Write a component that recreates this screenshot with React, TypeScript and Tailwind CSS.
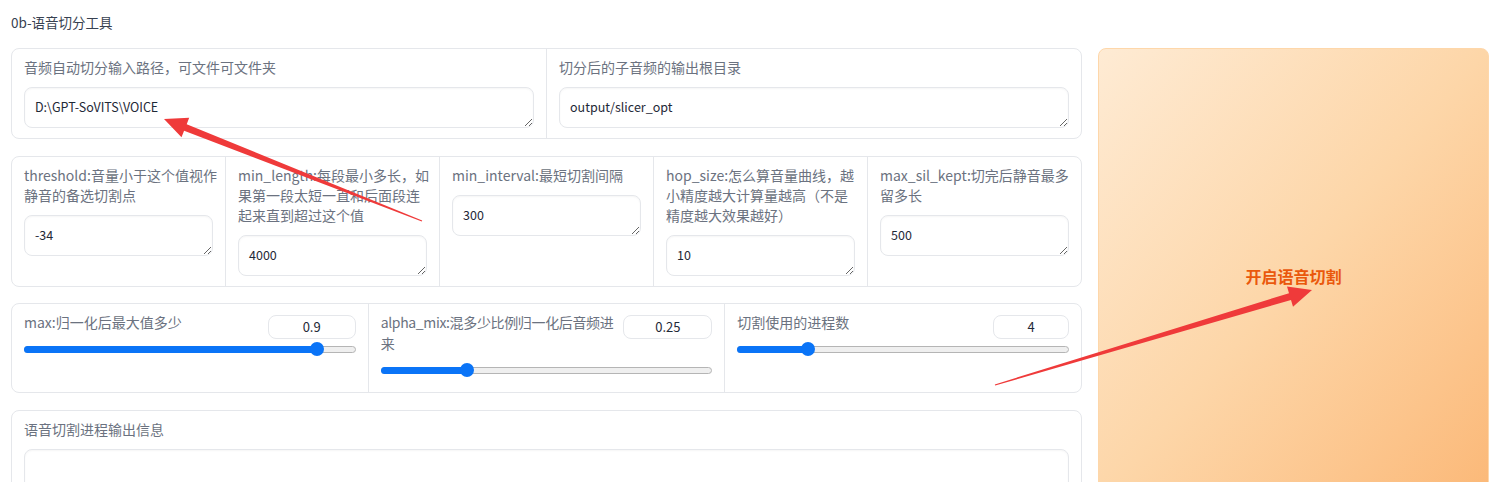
const FONT = { fontFamily: '"Noto Sans CJK SC", "Noto Sans", sans-serif' };

type Pt = [number, number];

function arrowPoints(tail: Pt, tip: Pt, headLen: number, headHalf: number, shaftHead: number, shaftTail: number) {
  const dx = tip[0] - tail[0];
  const dy = tip[1] - tail[1];
  const len = Math.hypot(dx, dy);
  const ux = dx / len;
  const uy = dy / len;
  const px = -uy;
  const py = ux;
  const bx = tip[0] - ux * headLen;
  const by = tip[1] - uy * headLen;
  const pts: Pt[] = [
    tip,
    [bx + px * headHalf, by + py * headHalf],
    [bx + px * shaftHead, by + py * shaftHead],
    [tail[0] + px * shaftTail, tail[1] + py * shaftTail],
    [tail[0] - px * shaftTail, tail[1] - py * shaftTail],
    [bx - px * shaftHead, by - py * shaftHead],
    [bx - px * headHalf, by - py * headHalf],
  ];
  return pts.map((p) => `${p[0].toFixed(1)},${p[1].toFixed(1)}`).join(' ');
}

function Label({ lines }: { lines: string[] }) {
  return (
    <div className="text-[14px] leading-[20px] text-[#6b7280]">
      {lines.map((l, i) => (
        <div key={i} className="whitespace-nowrap">
          {l}
        </div>
      ))}
    </div>
  );
}

function TextBox({ value, height = 41 }: { value: string; height?: number }) {
  return (
    <textarea
      rows={1}
      defaultValue={value}
      style={{ height, ...FONT }}
      className="mt-[10px] block w-full rounded-lg border border-[#e5e7eb] bg-white px-[10px] py-[9px] text-[12.5px] leading-[20px] text-[#1f2937] shadow-[inset_0_1px_2px_rgba(0,0,0,0.04)] outline-none"
    />
  );
}

function Field({ label, value }: { label: string[]; value: string }) {
  return (
    <div className="min-w-0 flex-1 basis-0 px-[12px] pt-[8px] pb-[10px]">
      <Label lines={label} />
      <TextBox value={value} />
    </div>
  );
}

type SliderProps = {
  label: string[];
  value: number;
  display: string;
  min: number;
  max: number;
  inputWidth: number;
  tight?: boolean;
};

function SliderField({ label, value, display, min, max, inputWidth, tight = false }: SliderProps) {
  const pct = (value - min) / (max - min);
  return (
    <div className="min-w-0 flex-1 basis-0 px-[12px] pt-[8px] pb-[15px]">
      <div className="flex items-start gap-3">
        <div
          className={`min-w-0 flex-1 text-[14px] leading-[21px] text-[#6b7280] ${tight ? 'tracking-[-0.35px]' : ''}`}
        >
          {label.map((l, i) => (
            <div key={i} className="whitespace-nowrap">
              {l}
            </div>
          ))}
        </div>
        <div
          style={{ width: inputWidth }}
          className="mt-[3px] -mb-[6px] flex h-[24px] shrink-0 items-center justify-center rounded-lg border border-[#e5e7eb] bg-white text-[13px] text-[#1f2937]"
        >
          {display}
        </div>
      </div>
      <div className="relative mt-[9px] h-[14px]">
        <div className="absolute inset-x-0 top-[3.5px] h-[7px] rounded-full border border-[#b5b5b5] bg-[#efefef]" />
        <div
          className="absolute left-0 top-[3.5px] h-[7px] rounded-full bg-[#0a74f7]"
          style={{ width: `calc(7px + (100% - 14px) * ${pct})` }}
        />
        <div
          className="absolute top-0 h-[14px] w-[14px] rounded-full bg-[#0a74f7]"
          style={{ left: `calc((100% - 14px) * ${pct})` }}
        />
      </div>
    </div>
  );
}

export default function App() {
  return (
    <div style={FONT} className="relative h-[482px] w-[1499px] overflow-hidden bg-white">
      <div className="pl-[11px] pr-[10px] pt-[12px]">
        <div className="text-[13.5px] leading-[20px] text-[#374151]">0b-语音切分工具</div>

        <div className="mt-[16px] flex items-stretch gap-[16px]">
          <div className="w-[1071px] shrink-0">
            <div className="flex divide-x divide-[#e5e7eb] rounded-lg border border-[#e5e7eb]">
              <Field label={['音频自动切分输入路径，可文件可文件夹']} value="D:\GPT-SoVITS\VOICE" />
              <Field label={['切分后的子音频的输出根目录']} value="output/slicer_opt" />
            </div>

            <div className="mt-[17px] flex divide-x divide-[#e5e7eb] rounded-lg border border-[#e5e7eb]">
              <Field label={['threshold:音量小于这个值视作', '静音的备选切割点']} value="-34" />
              <Field label={['min_length:每段最小多长，如', '果第一段太短一直和后面段连', '起来直到超过这个值']} value="4000" />
              <Field label={['min_interval:最短切割间隔']} value="300" />
              <Field label={['hop_size:怎么算音量曲线，越', '小精度越大计算量越高（不是', '精度越大效果越好）']} value="10" />
              <Field label={['max_sil_kept:切完后静音最多', '留多长']} value="500" />
            </div>

            <div className="mt-[16px] flex divide-x divide-[#e5e7eb] rounded-lg border border-[#e5e7eb]">
              <SliderField label={['max:归一化后最大值多少']} value={0.9} display="0.9" min={0} max={1} inputWidth={88} />
              <SliderField
                label={['alpha_mix:混多少比例归一化后音频进', '来']}
                value={0.25}
                display="0.25"
                min={0}
                max={1}
                inputWidth={89}
                tight
              />
              <SliderField label={['切割使用的进程数']} value={4} display="4" min={1} max={16} inputWidth={76} />
            </div>

            <div className="mt-[17px] rounded-lg border border-[#e5e7eb] px-[12px] pt-[8px] pb-[12px]">
              <Label lines={['语音切割进程输出信息']} />
              <TextBox value="" height={42} />
            </div>
          </div>

          <button className="flex flex-1 items-center justify-center rounded-lg border border-[#fed7aa] bg-linear-to-br from-[#feebd4] via-[#fdd6a8] to-[#fbb877] text-[16px] font-semibold text-[#ea580c]">
            开启语音切割
          </button>
        </div>
      </div>

      <svg className="pointer-events-none absolute inset-0" width="1499" height="482" viewBox="0 0 1499 482">
        <polygon points={arrowPoints([422, 221], [164, 119], 23, 10.5, 3.5, 0.6)} fill="#ef3a3a" />
        <polygon points={arrowPoints([995, 385], [1312, 290], 23, 10.5, 3.5, 0.6)} fill="#ef3a3a" />
      </svg>
    </div>
  );
}
